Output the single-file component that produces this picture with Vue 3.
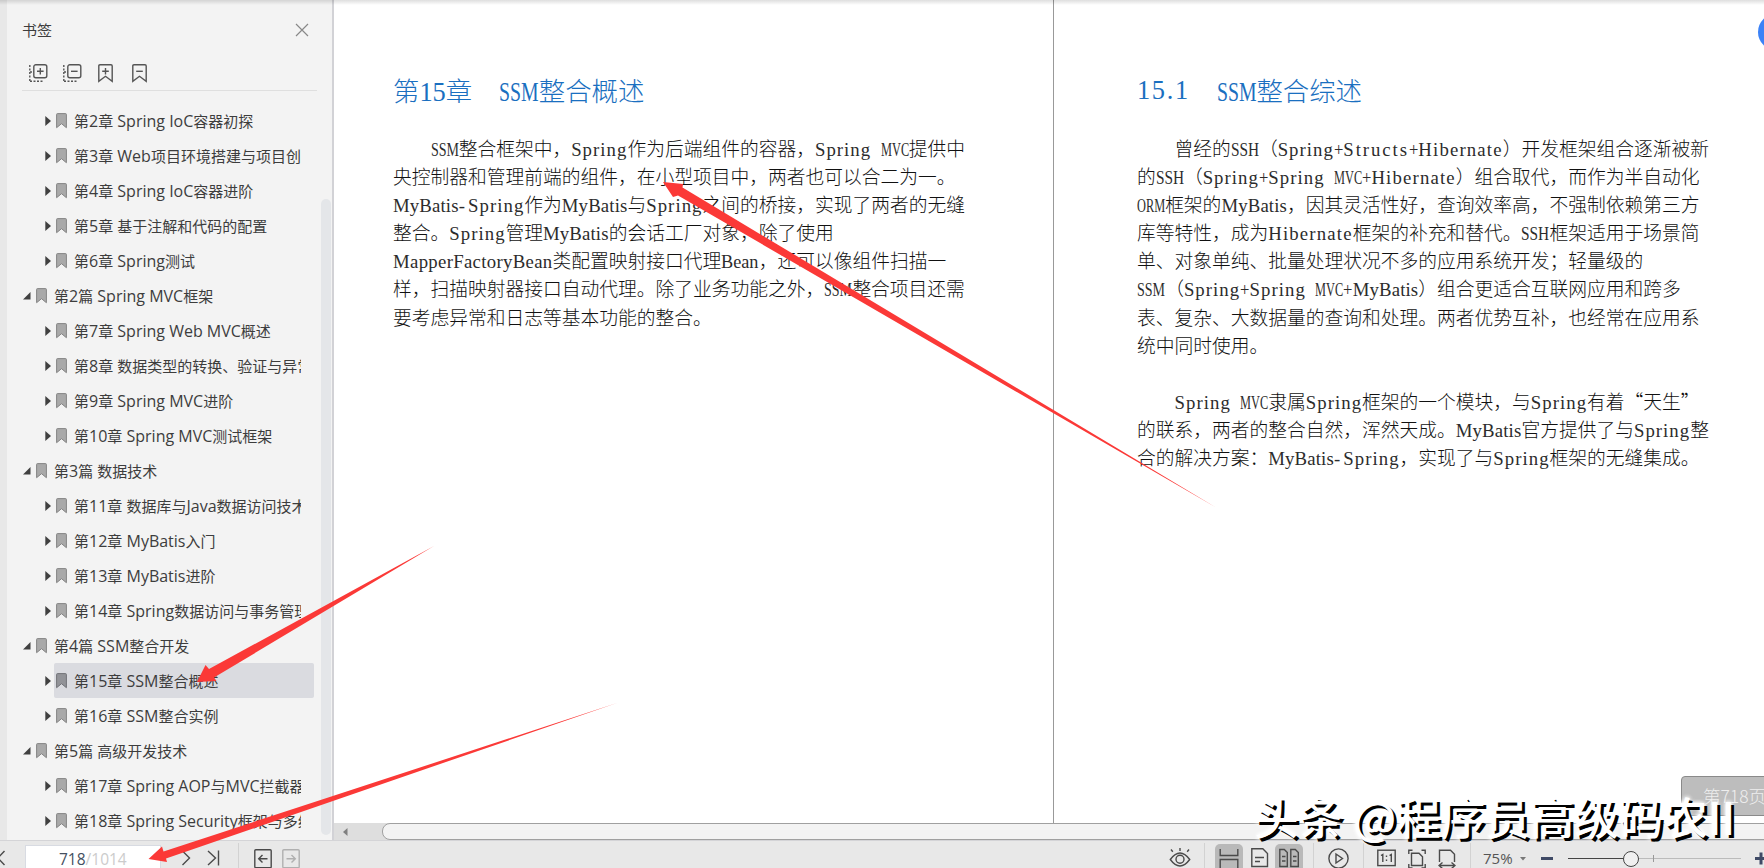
<script setup>
const bookmarks = [
  { title: "第2章 Spring IoC容器初探" },
  { title: "第3章 Web项目环境搭建与项目创" },
  { title: "第4章 Spring IoC容器进阶" },
  { title: "第5章 基于注解和代码的配置" },
  { title: "第6章 Spring测试" },
  { title: "第2篇 Spring MVC框架", open: true },
  { title: "第7章 Spring Web MVC概述" },
  { title: "第8章 数据类型的转换、验证与异常" },
  { title: "第9章 Spring MVC进阶" },
  { title: "第10章 Spring MVC测试框架" },
  { title: "第3篇 数据技术", open: true },
  { title: "第11章 数据库与Java数据访问技术" },
  { title: "第12章 MyBatis入门" },
  { title: "第13章 MyBatis进阶" },
  { title: "第14章 Spring数据访问与事务管理" },
  { title: "第4篇 SSM整合开发", open: true },
  { title: "第15章 SSM整合概述", active: true },
  { title: "第16章 SSM整合实例" },
  { title: "第5篇 高级开发技术", open: true },
  { title: "第17章 Spring AOP与MVC拦截器" },
  { title: "第18章 Spring Security框架与多线" },
];

const pages = [
  {
    heading: ["第15章", "SSM整合概述"],
    paragraphs: [
      [
        "SSM整合框架中，Spring作为后端组件的容器，Spring MVC提供中",
        "央控制器和管理前端的组件，在小型项目中，两者也可以合二为一。",
        "MyBatis-Spring作为MyBatis与Spring之间的桥接，实现了两者的无缝",
        "整合。Spring管理MyBatis的会话工厂对象，除了使用",
        "MapperFactoryBean类配置映射接口代理Bean，还可以像组件扫描一",
        "样，扫描映射器接口自动代理。除了业务功能之外，SSM整合项目还需",
        "要考虑异常和日志等基本功能的整合。",
      ],
    ],
  },
  {
    heading: ["15.1", "SSM整合综述"],
    paragraphs: [
      [
        "曾经的SSH（Spring+Structs+Hibernate）开发框架组合逐渐被新",
        "的SSH（Spring+Spring MVC+Hibernate）组合取代，而作为半自动化",
        "ORM框架的MyBatis，因其灵活性好，查询效率高，不强制依赖第三方",
        "库等特性，成为Hibernate框架的补充和替代。SSH框架适用于场景简",
        "单、对象单纯、批量处理状况不多的应用系统开发；轻量级的",
        "SSM（Spring+Spring MVC+MyBatis）组合更适合互联网应用和跨多",
        "表、复杂、大数据量的查询和处理。两者优势互补，也经常在应用系",
        "统中同时使用。",
      ],
      [
        "Spring MVC隶属Spring框架的一个模块，与Spring有着“天生”",
        "的联系，两者的整合自然，浑然天成。MyBatis官方提供了与Spring整",
        "合的解决方案：MyBatis-Spring，实现了与Spring框架的无缝集成。",
      ],
    ],
  },
];

const measure = document.createElement("canvas").getContext("2d");
measure.font = '100px "Liberation Serif", serif';

// Latin runs get their own font, so split them from the Chinese text
function runs(text) {
  return text
    .split(/([ -~]+)/)
    .filter(Boolean)
    .map((value) => ({ value, latin: /^[ -~]+$/.test(value) }));
}

// same, but words and separators apart, each char taking half an em:
// narrow words are spaced out, wide ones are squeezed
function bookRuns(text) {
  return text
    .split(/([A-Za-z0-9.]+|[ +-])/)
    .filter(Boolean)
    .map((value) => {
      const latin = /^[ -~]+$/.test(value);
      if (!latin) return { value, latin };
      const width = value.length * 0.5;
      const natural = measure.measureText(value).width / 100;
      const glyphs =
        natural > width
          ? { transform: `scaleX(${(width / natural).toFixed(3)})` }
          : { letterSpacing: `${((width - natural) / value.length).toFixed(3)}em` };
      return { value, latin, box: { width: `${width}em` }, glyphs };
    });
}
</script>

<template>
  <div class="reader">
    <div class="workspace">
      <aside class="sidebar">
        <header class="sidebar-header">
          <span>书签</span>
          <svg class="close" width="14" height="14" viewBox="0 0 14 14">
            <path d="M1 1l12 12M13 1L1 13" />
          </svg>
        </header>
        <div class="sidebar-tools">
          <svg width="19" height="19" viewBox="0 0 19 19">
            <path d="M.8 1v17M1 17.3h13M1 8h4" stroke-dasharray="2 1.5" />
            <rect x="4.8" y=".8" width="13" height="13" rx="2" />
            <path d="M8 7.3h6.6M11.3 4v6.6" />
          </svg>
          <svg width="19" height="19" viewBox="0 0 19 19">
            <path d="M.8 1v17M1 17.3h13M1 8h4" stroke-dasharray="2 1.5" />
            <rect x="4.8" y=".8" width="13" height="13" rx="2" />
            <path d="M8 7.3h6.6" />
          </svg>
          <svg width="15" height="19" viewBox="0 0 15 19">
            <path d="M.8 17.3V2Q.8.8 2 .8h11q1.2 0 1.2 1.2v15.3l-6.7-5z" />
            <path d="M4.2 7.3h6.6M7.5 4v6.6" />
          </svg>
          <svg width="15" height="19" viewBox="0 0 15 19">
            <path d="M.8 17.3V2Q.8.8 2 .8h11q1.2 0 1.2 1.2v15.3l-6.7-5z" />
            <path d="M4.2 7.3h6.6" />
          </svg>
        </div>
        <div class="tree">
          <div
            v-for="item in bookmarks"
            :key="item.title"
            class="node"
            :class="{ parent: item.open, active: item.active }"
          >
            <svg v-if="item.open" class="toggle" width="8" height="8" viewBox="0 0 8 8">
              <path d="M7.5 0v7.5H0z" />
            </svg>
            <svg v-else class="toggle" width="6" height="10" viewBox="0 0 6 10">
              <path d="M.3 0L6 5 .3 10z" />
            </svg>
            <div class="node-label">
              <svg class="flag" width="11" height="16" viewBox="0 0 11 16">
                <path d="M.6 14.7V1.5Q.6.6 1.5.6h8q.9 0 .9.9v13.2L5.5 10.7z" />
              </svg>
              <span class="node-text">
                <span
                  v-for="(run, i) in runs(item.title)"
                  :key="i"
                  :class="{ latin: run.latin }"
                >{{ run.value }}</span>
              </span>
            </div>
          </div>
        </div>
        <div class="tree-scroll" />
      </aside>

      <main class="viewer">
        <div class="pages">
          <article v-for="page in pages" :key="page.heading[0]" class="page">
            <h1>
              <span v-for="part in page.heading" :key="part" class="heading-part">
                <span
                  v-for="(run, i) in bookRuns(part)"
                  :key="i"
                  :class="{ latin: run.latin }"
                  :style="run.box"
                ><span class="glyphs" :style="run.glyphs">{{ run.value }}</span></span>
              </span>
            </h1>
            <section v-for="(lines, p) in page.paragraphs" :key="p" class="paragraph">
              <div v-for="line in lines" :key="line" class="line">
                <span
                  v-for="(run, i) in bookRuns(line)"
                  :key="i"
                  :class="{ latin: run.latin }"
                  :style="run.box"
                ><span class="glyphs" :style="run.glyphs">{{ run.value }}</span></span>
              </div>
            </section>
          </article>
        </div>
        <div class="h-scroll">
          <svg width="5" height="8" viewBox="0 0 5 8"><path d="M4.5 0v8L0 4z" /></svg>
          <div class="h-thumb" />
        </div>
      </main>
    </div>

    <footer class="status">
      <svg class="prev" width="6" height="18" viewBox="0 0 6 18">
        <path d="M4.5 2L-2 9l6.5 7" />
      </svg>
      <div class="page-input"><span>718</span><span class="total">/1014</span></div>
      <svg class="next" width="10" height="18" viewBox="0 0 10 18">
        <path d="M1.5 2l7 7-7 7" />
      </svg>
      <svg class="last" width="13" height="18" viewBox="0 0 13 18">
        <path d="M1 2l7.5 7L1 16M11.5 1.5v15" />
      </svg>
      <i class="sep sep-nav" />
      <svg class="jump" width="18" height="20" viewBox="0 0 18 20">
        <rect x=".8" y=".8" width="16.4" height="18" rx="1" />
        <path d="M5 9.8h8.5M8.5 6L4.7 9.8l3.8 3.8" />
      </svg>
      <svg class="jump disabled" width="18" height="20" viewBox="0 0 18 20">
        <rect x=".8" y=".8" width="16.4" height="18" rx="1" />
        <path d="M4.5 9.8H13M9.5 6l3.8 3.8-3.8 3.8" />
      </svg>

      <div class="spacer" />

      <svg class="eye" width="22" height="20" viewBox="0 0 22 20">
        <path d="M1.3 12.5q9.7-13 19.4 0-9.7 13-19.4 0z" />
        <circle cx="11" cy="12.3" r="4" />
        <path d="M11 1v3M2 2.5l1.8 2.2M20 2.5l-1.8 2.2" />
      </svg>
      <i class="sep sep-view" />
      <span class="mode">
        <svg width="20" height="22" viewBox="0 0 20 22">
          <path d="M1.2 3v6.5h17.6V3M1.2 22v-8.5h17.6V22" />
        </svg>
      </span>
      <svg class="single" width="18" height="22" viewBox="0 0 18 22">
        <path d="M.8 2.8h11l4.7 4.7v13H.8zM4 11.5h9M4 15.5h5" />
      </svg>
      <span class="mode">
        <svg width="20" height="22" viewBox="0 0 20 22">
          <path d="M.8 3.5h4.5l3 3v14H.8zM11.8 3.5h4.5l3 3v14h-7.5zM3 10.5h3.5M3 15h3.5M14 10.5h3.5M14 15h3.5" />
        </svg>
      </span>
      <i class="sep sep-play" />
      <svg class="play" width="21" height="21" viewBox="0 0 21 21">
        <circle cx="10.5" cy="10.5" r="9.6" />
        <path d="M8 6v9l6.5-4.5z" />
      </svg>
      <i class="sep sep-fit" />
      <svg class="actual" width="19" height="18" viewBox="0 0 19 18">
        <rect x=".8" y="1.2" width="17.4" height="15.4" />
        <path d="M4 6.5l1.8-1v7.5M12.5 6.5l1.8-1v7.5M9.5 6.5v1.5M9.5 10.5v1.5" />
      </svg>
      <svg class="fit" width="18" height="20" viewBox="0 0 18 20">
        <path d="M3.5 4.3h7.5l3.5 3.5v8.7h-11zM.8 5V1.2h3.7M13.5 1.2h3.7V5M.8 15v4h3.7M13.5 19h3.7v-4" />
      </svg>
      <svg class="fit-width" width="18" height="20" viewBox="0 0 18 20">
        <path d="M1.5 13V1.2h11l4 4V13M1 16.5h16M4.5 13.5l-3.5 3 3.5 3M13.5 13.5l3.5 3-3.5 3" />
      </svg>
      <i class="sep sep-zoom" />
      <span class="zoom">75%</span>
      <svg class="caret" width="6" height="4" viewBox="0 0 6 4"><path d="M0 0h6L3 3.5z" /></svg>
      <span class="minus" />
      <div class="slider">
        <span class="tick" />
        <span class="knob" />
      </div>
      <svg class="plus" width="9" height="13" viewBox="0 0 9 13">
        <path d="M0 6.5h12M6 .5v12" />
      </svg>
    </footer>

    <div class="top-shadow" />
    <div class="side-bubble" />
    <div class="page-tip">第718页</div>

    <svg class="arrows" width="1764" height="868" viewBox="0 0 1764 868">
      <path d="M663 182L683 184l-.5 3.500L1216 507.500 678 195.500l-5 1.500z" />
      <path d="M197 682l8.500-17 3.500 4L434 546 214 677.500l2.500 3.500z" />
      <path d="M148.500 859l13.500-12.500 1.500 5L617 703 166 858.500l1 3.500z" />
    </svg>

    <div class="watermark">头条 @程序员高级码农II</div>
  </div>
</template>

<style>
body {
  overflow: hidden;
}
</style>

<style scoped>
.reader {
  position: relative;
  width: 1764px;
  height: 868px;
  overflow: hidden;
  display: flex;
  flex-direction: column;
  background: #e8e8e8;
  color: #3d3d3d;
  font-family: "Noto Sans CJK SC", sans-serif;
}

.workspace {
  display: flex;
  height: 840px;
}

.sidebar {
  position: relative;
  box-sizing: border-box;
  width: 334px;
  border-left: 7px solid #e8e8e8;
  border-right: 2px solid #d2d2d6;
  background: #f3f3f3;
  overflow: hidden;
}

.sidebar-header {
  display: flex;
  align-items: center;
  justify-content: space-between;
  height: 60px;
  padding: 0 23px 0 15px;
  font-size: 15px;
}

.sidebar-header span {
  margin-top: -2px;
}

.close {
  fill: none;
  stroke: #888;
  stroke-width: 1.2;
}

.sidebar-tools {
  display: flex;
  align-items: flex-start;
  box-sizing: border-box;
  height: 31px;
  margin: 0 15px;
  padding: 4px 0 0 7px;
  border-bottom: 1px solid #dfdfdf;
  fill: none;
  stroke: #555;
  stroke-width: 1.4;
}

.sidebar-tools svg {
  margin-right: 15px;
}

.sidebar-tools svg + svg + svg {
  margin-left: 1px;
  margin-right: 18px;
}

.tree {
  padding-top: 12px;
}

.node {
  display: flex;
  align-items: center;
  height: 35px;
  padding-left: 35px;
}

.node.parent {
  padding-left: 16px;
}

.toggle {
  width: 12px;
  flex-shrink: 0;
  fill: #404040;
}

.parent .toggle {
  width: 8px;
  margin-right: 3px;
}

.node-label {
  display: flex;
  align-items: center;
  box-sizing: border-box;
  width: 260px;
  height: 35px;
  padding-left: 2px;
  border-radius: 2px;
  font-size: 15px;
}

.active .node-label {
  background: #dadbe0;
}

.flag {
  flex-shrink: 0;
  margin-right: 7px;
  fill: #a9a9a9;
  stroke: #858585;
}

.active .flag {
  fill: #929398;
  stroke: #727378;
}

.node-text {
  width: 227px;
  overflow: hidden;
  white-space: pre;
  line-height: 34px;
  display: flex;
  align-items: baseline;
}

.node-text .latin {
  font-family: "Open Sans", sans-serif;
  font-size: 16px;
}

.tree-scroll {
  position: absolute;
  top: 199px;
  right: 1px;
  width: 10px;
  height: 636px;
  border-radius: 5px;
  background: #e4e6e9;
}

.viewer {
  display: flex;
  flex-direction: column;
  flex: 1;
  min-width: 0;
}

.pages {
  display: flex;
  height: 823px;
  background: #fff;
  color: #111;
}

.page {
  box-sizing: border-box;
  width: 720px;
  padding: 72px 0 0 59px;
  border-right: 1px solid #999;
  flex-shrink: 0;
}

.page + .page {
  width: 710px;
  padding-left: 83px;
  border: 0;
}

h1 {
  display: flex;
  gap: 27px;
  height: 36px;
  margin: 0;
  color: #1a6fc0;
  font-size: 26.4px;
  font-weight: 300;
  line-height: 36px;
}

.heading-part {
  display: flex;
  align-items: baseline;
}

.paragraph {
  padding-top: 26px;
  font-size: 18.76px;
  font-weight: 300;
}

.paragraph + .paragraph {
  padding-top: 28px;
}

.line {
  display: flex;
  align-items: baseline;
  height: 28.1px;
  line-height: 28.1px;
  white-space: pre;
}

.line:first-child {
  padding-left: 2em;
}

.page .latin {
  flex-shrink: 0;
  white-space: pre;
  font-family: "Liberation Serif", serif;
}

.line .latin {
  color: #2c2c2c;
}

.latin .glyphs {
  display: inline-block;
  transform-origin: left;
}

.h-scroll {
  display: flex;
  align-items: center;
  height: 17px;
  padding-left: 9px;
  background: #dedede;
  overflow: hidden;
  fill: #808080;
}

.h-scroll svg {
  flex-shrink: 0;
}

.h-thumb {
  box-sizing: border-box;
  flex: 0 0 1400px;
  height: 17px;
  margin-left: 34px;
  border: 1px solid #a0a0a0;
  border-radius: 8px;
  background: #f3f3f3;
}

.status {
  display: flex;
  align-items: flex-start;
  box-sizing: border-box;
  height: 28px;
  border-top: 1px solid #d4d4d7;
  background: #e8e8e8;
  overflow: hidden;
  fill: none;
  stroke: #4a4a4a;
  stroke-width: 1.4;
}

.status > * {
  flex-shrink: 0;
}

.prev,
.next,
.last {
  margin-top: 8px;
}

.page-input {
  box-sizing: border-box;
  width: 136px;
  height: 30px;
  margin: 4px 20px 0 19px;
  padding-left: 33px;
  border: 1px solid #d8dbe2;
  background: #fff;
  color: #44505f;
  font: 15.5px/26px "Open Sans", sans-serif;
}

.total {
  color: #ccc;
}

.last {
  margin-left: 16px;
}

.sep {
  width: 1px;
  height: 26px;
  margin-top: 2px;
  background: #d2d2d2;
}

.sep-nav {
  margin: 2px 15px 0 18px;
}

.jump {
  margin: 8px 10px 0 0;
}

.jump.disabled {
  stroke: #b0b0b0;
}

.spacer {
  flex: 1;
}

.eye {
  margin-top: 6px;
}

.sep-view {
  margin: 2px 10px 0 13px;
}

.mode {
  display: flex;
  justify-content: center;
  width: 28px;
  height: 28px;
  padding-top: 2px;
  margin-top: 3px;
  border-radius: 5px;
  background: #b9b9b9;
}

.single {
  margin: 5px 6px 0 8px;
}

.sep-play {
  margin-left: 10px;
}

.play {
  margin: 7px 14px 0;
}

.actual {
  margin: 8px 12px 0 13px;
}

.fit {
  margin: 8px 12px 0 0;
}

.fit-width {
  margin-top: 8px;
}

.sep-zoom {
  margin: 2px 12px 0 14px;
}

.zoom {
  width: 32px;
  color: #555;
  font: 15px/35px "Open Sans", sans-serif;
}

.caret {
  margin: 16px 15px 0 5px;
  fill: #777;
  stroke: none;
}

.minus {
  width: 12px;
  height: 3px;
  margin: 16px 15px 0 0;
  background: #3f4a66;
}

.slider {
  position: relative;
  width: 173px;
  height: 1px;
  margin: 17px 14px 0 0;
  background: linear-gradient(90deg, #444 60px, #bbb 60px);
}

.tick {
  position: absolute;
  left: 85px;
  top: -3px;
  width: 1px;
  height: 7px;
  background: #999;
}

.knob {
  position: absolute;
  left: 55px;
  top: -7px;
  box-sizing: border-box;
  width: 16px;
  height: 16px;
  border: 1.5px solid #444;
  border-radius: 50%;
  background: #f0f0f0;
}

.plus {
  margin-top: 11px;
  stroke: #3f4a66;
  stroke-width: 3;
}

.top-shadow {
  position: absolute;
  top: 0;
  left: 0;
  width: 100%;
  height: 5px;
  background: linear-gradient(rgba(0, 0, 0, 0.13), rgba(0, 0, 0, 0));
}

.side-bubble {
  position: absolute;
  top: 14px;
  right: -30px;
  width: 36px;
  height: 36px;
  border-radius: 50%;
  background: #3b82f7;
}

.page-tip {
  position: absolute;
  left: 1681px;
  top: 776px;
  box-sizing: border-box;
  width: 100px;
  height: 40px;
  padding-left: 21px;
  border: 1px solid #8a8a8a;
  border-radius: 4px;
  background: #bdbdbd;
  color: #eee;
  font-size: 17.5px;
  font-weight: 300;
  line-height: 37px;
  white-space: nowrap;
}

.arrows {
  position: absolute;
  left: 0;
  top: 0;
  fill: #fb3937;
}

/* white lettering with a hard black drop gives the embossed stamp */
.watermark {
  position: absolute;
  left: 1254px;
  top: 784px;
  color: #fff;
  font-size: 44.5px;
  font-weight: 500;
  line-height: 64px;
  white-space: pre;
  text-shadow:
    3px 3px 0 #000,
    0 0 4px #fff,
    0 0 4px #fff;
}
</style>
